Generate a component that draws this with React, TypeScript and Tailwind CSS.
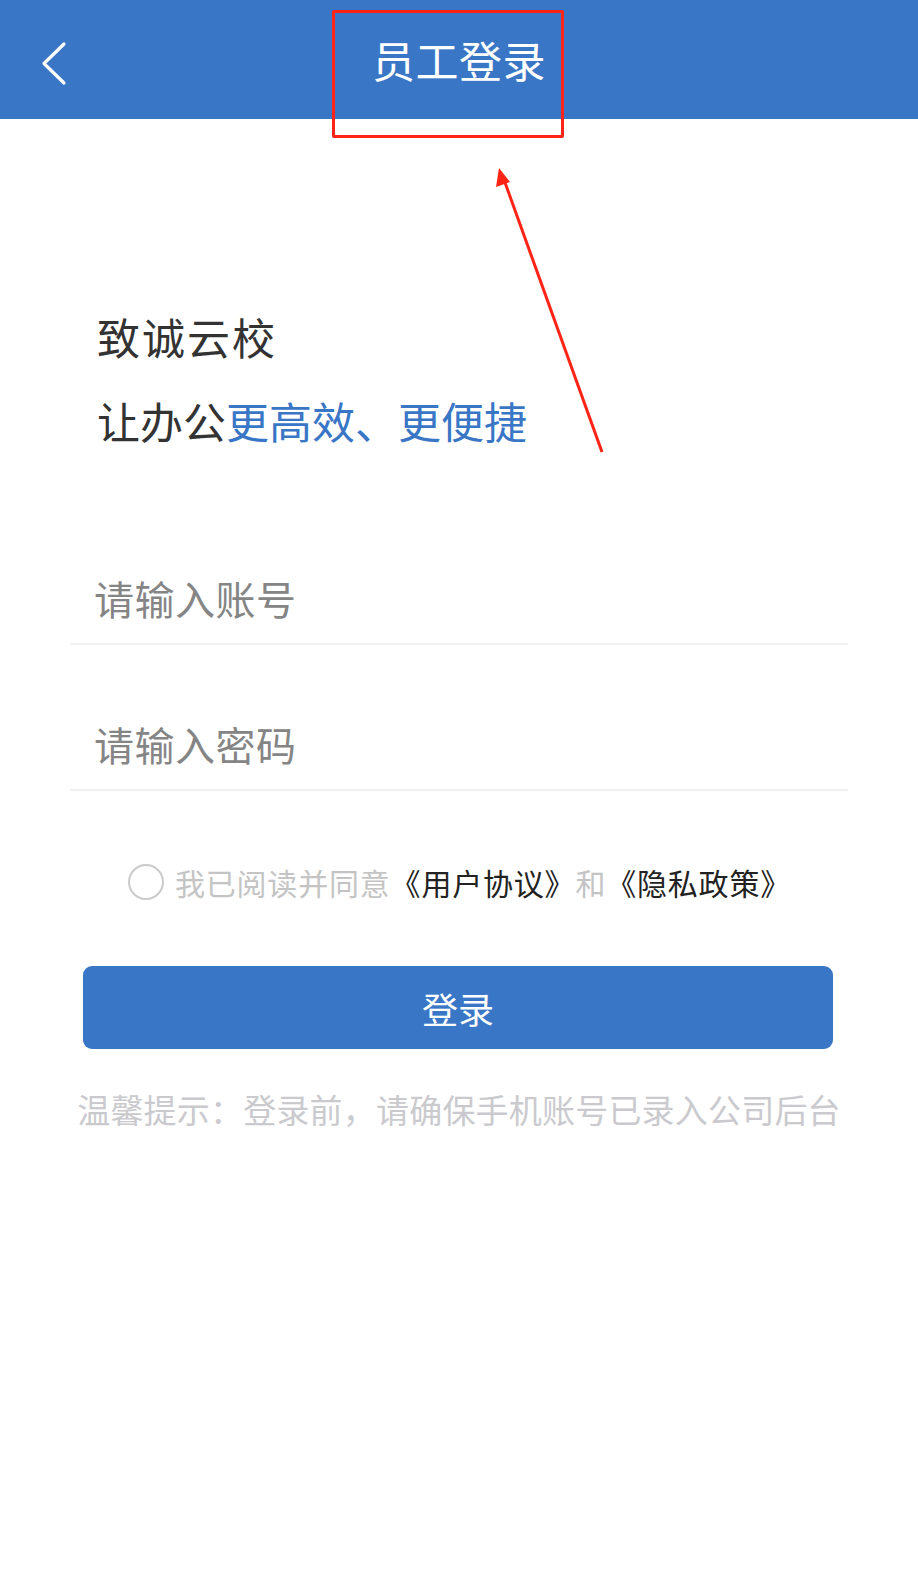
import React from 'react';

const font = { fontFamily: '"Noto Sans CJK SC", "Noto Sans", sans-serif' };

export default function App() {
    return (
        <div className="relative min-h-[1578px] w-full bg-white" style={font}>
            {/* nav bar */}
            <header className="grid h-[119px] grid-cols-[1fr_auto_1fr] items-center bg-[#3a76c6]">
                <button className="flex h-full w-[100px] items-center pl-[40px] pt-[8px]">
                    <svg width="28" height="46" viewBox="0 0 28 46" fill="none">
                        <path d="M24 3 L4 22.5 L24 42" stroke="#fff" strokeWidth="3.2" strokeLinecap="round" strokeLinejoin="round" />
                    </svg>
                </button>
                <h1 className="text-[43px] leading-none tracking-[0.5px] text-white">员工登录</h1>
                <div />
            </header>

            <main className="px-[70px]">
                <div className="mt-[175px] pl-[27px] text-[43px] leading-[84px] text-[#333]">
                    <p className="tracking-[2px]">致诚云校</p>
                    <p>
                        让办公<span className="text-[#3a76c6]">更高效、更便捷</span>
                    </p>
                </div>

                <div className="mt-[96px]">
                    <div className="flex h-[87px] items-center border-b-2 border-[#f1f1f1] pb-[6px] pl-[24px]">
                        <input
                            className="w-full bg-transparent text-[40px] tracking-[0.5px] text-[#333] outline-none placeholder:text-[#858585]"
                            placeholder="请输入账号"
                        />
                    </div>
                    <div className="mt-[59px] flex h-[87px] items-center border-b-2 border-[#f1f1f1] pb-[6px] pl-[24px]">
                        <input
                            type="password"
                            className="w-full bg-transparent text-[40px] tracking-[0.5px] text-[#333] outline-none placeholder:text-[#858585]"
                            placeholder="请输入密码"
                        />
                    </div>
                </div>

                <div className="mt-[66px] flex h-[50px] items-center justify-center gap-[11px] pl-[1px]">
                    <span className="h-[36px] w-[36px] rounded-full border-2 border-[#cbcbcb]" />
                    <p className="text-[30px] leading-none tracking-[0.8px] text-[#c4c4c4]">
                        我已阅读并同意<span className="text-[#222]">《用户协议》</span>和<span className="text-[#222]">《隐私政策》</span>
                    </p>
                </div>

                <button className="mx-[13px] mt-[59px] flex h-[83px] w-[750px] items-center justify-center rounded-[9px] bg-[#3a76c6] text-[36px] text-white">
                    登录
                </button>

                <p className="mt-[37px] text-center text-[33px] leading-[46px] tracking-[0.2px] text-[#cacace]">
                    温馨提示：登录前，请确保手机账号已录入公司后台
                </p>
            </main>

            {/* annotation: red box + arrow */}
            <div className="absolute left-[332px] top-[10px] h-[128px] w-[232px] rounded-[2px] border-[3px] border-[#ff2416]" />
            <svg className="absolute left-0 top-0" width="918" height="500" viewBox="0 0 918 500" fill="none">
                <line x1="602" y1="452" x2="503" y2="177" stroke="#ff2416" strokeWidth="3" />
                <polygon points="499,168 496,187 510,182" fill="#ff2416" />
            </svg>
        </div>
    );
}
